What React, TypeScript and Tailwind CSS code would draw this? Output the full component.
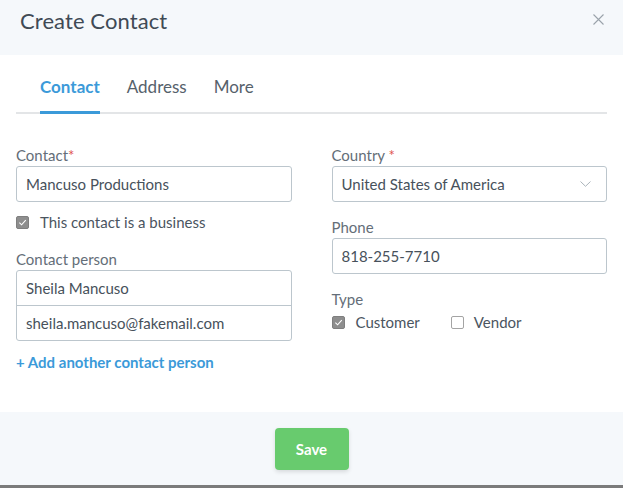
import { useState } from 'react'

type Tab = 'Contact' | 'Address' | 'More'

const font = { fontFamily: 'Lato, "Liberation Sans", sans-serif' }

function Check({ checked, onChange }: { checked: boolean; onChange: () => void }) {
  return (
    <button
      type="button"
      onClick={onChange}
      className={
        checked
          ? 'flex h-[13px] w-[13px] items-center justify-center rounded-[2px] border border-[#7f7f7f] bg-[#8e8e8e]'
          : 'flex h-[13px] w-[13px] items-center justify-center rounded-[2px] border border-[#a4a4a4] bg-white'
      }
    >
      {checked ? (
        <svg width="9" height="9" viewBox="0 0 10 10" fill="none">
          <path d="M1.5 5.2 4 7.6 8.6 2.4" stroke="#ffffff" strokeWidth="1.2" />
        </svg>
      ) : null}
    </button>
  )
}

function Label({ text, required, spaced }: { text: string; required?: boolean; spaced?: boolean }) {
  return (
    <div className="h-5 text-[15px] leading-5 text-[#646e78]">
      {text}
      {required ? <span className="text-[#e0514d]">{spaced ? ' *' : '*'}</span> : null}
    </div>
  )
}

export default function App() {
  const [tab, setTab] = useState<Tab>('Contact')
  const [business, setBusiness] = useState(true)
  const [customer, setCustomer] = useState(true)
  const [vendor, setVendor] = useState(false)

  const inputCls =
    'block h-9 w-full rounded-[3px] border border-[#bcc6cd] bg-white px-[9px] text-[15px] text-[#47515b] outline-none'

  return (
    <div className="flex h-[488px] w-[623px] flex-col bg-white" style={font}>
      <div className="flex h-[55px] shrink-0 items-start justify-between bg-[#f5f8fb] pl-5 pr-[19px] pt-[6px]">
        <h1 className="text-[22px] leading-[30px] tracking-[0.1px] text-[#3f4a55]">Create Contact</h1>
        <button type="button" className="mt-[8px] text-[#9aa3ab]">
          <svg width="11" height="11" viewBox="0 0 11 11" fill="none">
            <path d="M0.5 0.5 10.5 10.5 M10.5 0.5 0.5 10.5" stroke="currentColor" strokeWidth="1.1" />
          </svg>
        </button>
      </div>

      <div className="flex-1 px-4">
        <div className="mt-5 flex gap-[27px] border-b-2 border-[#e3e5e7] pl-6">
          {(['Contact', 'Address', 'More'] as Tab[]).map((t) => (
            <button
              key={t}
              type="button"
              onClick={() => setTab(t)}
              className={
                tab === t
                  ? '-mb-[2px] border-b-[3px] border-[#3b9ad9] pb-[12px] text-[17px] font-bold leading-6 text-[#3b9ad9]'
                  : '-mb-[2px] border-b-[3px] border-transparent pb-[12px] text-[17px] leading-6 text-[#56616b]'
              }
            >
              {t}
            </button>
          ))}
        </div>

        <div className="mt-[31px] grid grid-cols-2 gap-10">
          <div>
            <Label text="Contact" required />
            <div className="mt-[1px]">
              <input className={inputCls} defaultValue="Mancuso Productions" />
            </div>
            <div className="mt-[10px] flex h-[21px] items-center gap-[11px] text-[15px] text-[#4b555f]">
              <Check checked={business} onChange={() => setBusiness(!business)} />
              <span>This contact is a business</span>
            </div>
            <div className="mt-4">
              <Label text="Contact person" />
            </div>
            <div className="mt-[1px] overflow-hidden rounded-[3px] border border-[#bcc6cd]">
              <input
                className="block h-[35px] w-full border-b border-[#bcc6cd] px-[9px] text-[15px] text-[#47515b] outline-none"
                defaultValue="Sheila Mancuso"
              />
              <input
                className="block h-[34px] w-full px-[9px] text-[15px] text-[#47515b] outline-none"
                defaultValue="sheila.mancuso@fakemail.com"
              />
            </div>
            <button type="button" className="mt-[11px] h-5 text-[15px] font-bold leading-5 text-[#3b9ad9]">
              + Add another contact person
            </button>
          </div>

          <div>
            <Label text="Country" required spaced />
            <div className="relative mt-[1px]">
              <div className={inputCls + ' flex items-center'}>United States of America</div>
              <svg
                className="absolute right-[16px] top-[15px]"
                width="11"
                height="6"
                viewBox="0 0 11 6"
                fill="none"
              >
                <path d="M0.5 0.5 5.5 5.3 10.5 0.5" stroke="#aab3ba" strokeWidth="1" />
              </svg>
            </div>
            <div className="mt-[15px]">
              <Label text="Phone" />
            </div>
            <div className="mt-[1px]">
              <input className={inputCls} defaultValue="818-255-7710" />
            </div>
            <div className="mt-[15px]">
              <Label text="Type" />
            </div>
            <div className="mt-[3px] flex h-[21px] items-center text-[15px] text-[#4b555f]">
              <div className="flex items-center gap-[11px]">
                <Check checked={customer} onChange={() => setCustomer(!customer)} />
                <span>Customer</span>
              </div>
              <div className="ml-[31px] flex items-center gap-[10px]">
                <Check checked={vendor} onChange={() => setVendor(!vendor)} />
                <span>Vendor</span>
              </div>
            </div>
          </div>
        </div>
      </div>

      <div className="flex h-[76px] shrink-0 justify-center border-b-[3px] border-[#7b7b7b] bg-[#f5f8fb] pt-4">
        <button
          type="button"
          className="h-[42px] w-[74px] rounded-[4px] bg-[#68cb6e] text-[15px] font-bold text-white shadow-[0_2px_4px_rgba(0,0,0,0.12)]"
        >
          Save
        </button>
      </div>
    </div>
  )
}
